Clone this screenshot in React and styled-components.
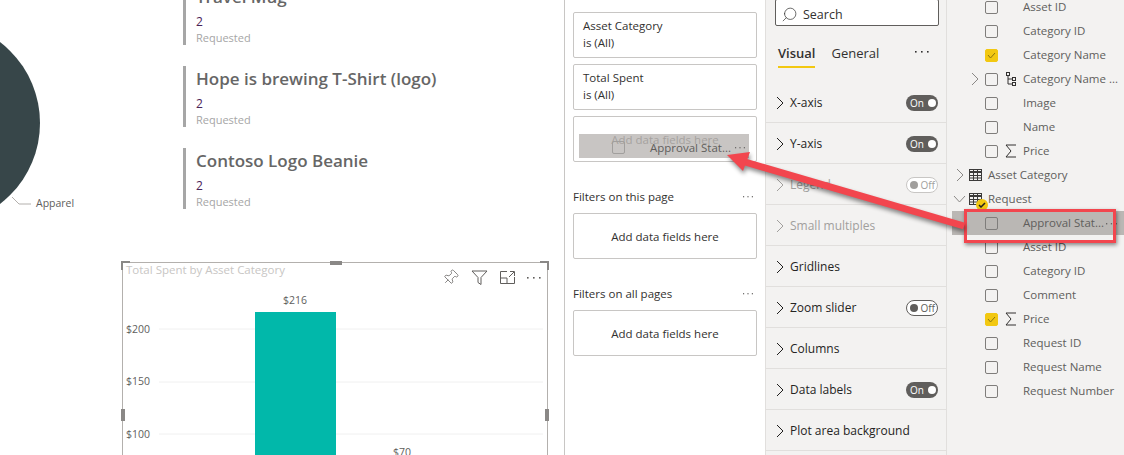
import { Pin, Search } from "lucide-react";
import { createGlobalStyle, styled } from "styled-components";

const FONT = `"Open Sans", "Noto Sans", "Liberation Sans", sans-serif`;

const requests = ["Travel Mug", "Hope is brewing T-Shirt (logo)", "Contoso Logo Beanie"];

const sections = [
  { name: "X-axis", toggle: "on" },
  { name: "Y-axis", toggle: "on" },
  { name: "Legend", toggle: "off", muted: true },
  { name: "Small multiples", muted: true },
  { name: "Gridlines" },
  { name: "Zoom slider", toggle: "off" },
  { name: "Columns" },
  { name: "Data labels", toggle: "on" },
  { name: "Plot area background" },
];

const fields = [
  { label: "Asset ID" },
  { label: "Category ID" },
  { label: "Category Name", checked: true },
  { label: "Category Name ...", icon: "tree", expand: true },
  { label: "Image" },
  { label: "Name" },
  { label: "Price", icon: "sigma" },
  { label: "Asset Category", group: "closed" },
  { label: "Request", group: "open", badge: true },
  { label: "Approval Stat...", active: true },
  { label: "Asset ID" },
  { label: "Category ID" },
  { label: "Comment" },
  { label: "Price", icon: "sigma", checked: true },
  { label: "Request ID" },
  { label: "Request Name" },
  { label: "Request Number" },
];

function Chevron({ open, color = "#323130", inset = 0 }) {
  return (
    <svg width="13" height="14" viewBox="0 0 13 14" fill="none" stroke={color} strokeWidth="1">
      {open ? (
        <polyline points="1,4 6.5,10 12,4" />
      ) : (
        <polyline points={`${inset},1 ${inset + 6},7 ${inset},13`} />
      )}
    </svg>
  );
}

function Dots({ color = "#605e5c", width = 15 }) {
  return (
    <svg width={width} height="3" viewBox="0 0 15 3" fill={color}>
      <rect x="0" y="1" width="1.6" height="1.6" />
      <rect x="6" y="1" width="1.6" height="1.6" />
      <rect x="12" y="1" width="1.6" height="1.6" />
    </svg>
  );
}

function Sigma() {
  return (
    <svg width="12" height="14" viewBox="0 0 12 14" fill="none" stroke="#323130" strokeWidth="1">
      <path d="M11 1H1l5 6-5 6h10" />
    </svg>
  );
}

function Tree() {
  return (
    <svg width="12" height="14" viewBox="0 0 12 14" fill="none" stroke="#323130" strokeWidth="1">
      <rect x="1.5" y="0.5" width="3" height="3" />
      <rect x="7.5" y="5.5" width="3" height="3" />
      <rect x="7.5" y="10.5" width="3" height="3" />
      <path d="M3 4v8h4.500M3 7h4.500" />
    </svg>
  );
}

function TableIcon() {
  return (
    <svg width="13" height="12" viewBox="0 0 13 12" fill="none" stroke="#3b3a39" strokeWidth="1">
      <rect x="0.5" y="0.5" width="12" height="11" />
      <path d="M0 3h13" strokeWidth="2" />
      <path d="M0 6.500h13M0 9h13M4.500 0v12M8.500 0v12" />
    </svg>
  );
}

function Toggle({ state, muted }) {
  return state === "on" ? (
    <ToggleOn>
      On
      <Knob />
    </ToggleOn>
  ) : (
    <ToggleOff $muted={muted}>
      <Knob $off $muted={muted} />
      Off
    </ToggleOff>
  );
}

function FieldRow({ field }) {
  if (field.group) {
    return (
      <GroupRow>
        <ChevronSlot>
          <Chevron open={field.group === "open"} color="#8a8886" inset={4} />
        </ChevronSlot>
        <TableSlot>
          <TableIcon />
          {field.badge && (
            <Badge>
              <svg width="8" height="6" viewBox="0 0 8 6" fill="none" stroke="#201f1e" strokeWidth="1.500">
                <polyline points="1,3 3,5 7,1" />
              </svg>
            </Badge>
          )}
        </TableSlot>
        <FieldLabel $group>{field.label}</FieldLabel>
      </GroupRow>
    );
  }
  return (
    <Row $active={field.active}>
      <ChevronSlot>{field.expand && <Chevron color="#8a8886" />}</ChevronSlot>
      <CheckBox $checked={field.checked}>
        {field.checked && (
          <svg width="9" height="7" viewBox="0 0 9 7" fill="none" stroke="#8a7410" strokeWidth="1">
            <polyline points="1,3 3.500,6 8,1" />
          </svg>
        )}
      </CheckBox>
      <IconSlot>
        {field.icon === "sigma" && <Sigma />}
        {field.icon === "tree" && <Tree />}
      </IconSlot>
      <FieldLabel>{field.label}</FieldLabel>
      {field.active && (
        <RowDots>
          <Dots width={12} />
        </RowDots>
      )}
    </Row>
  );
}

function App() {
  return (
    <Page>
      <GlobalStyle />
      <Canvas>
        <TopRow>
          <PieChart width="183" height="240" viewBox="0 0 183 240">
            <circle cx="-62" cy="123" r="102" fill="#374649" />
            <polyline points="12,197 19,204 31,204" fill="none" stroke="#b3b0ad" strokeWidth="1" />
            <text x="36" y="207" fontSize="10.5" fill="#605e5c" fontFamily={FONT}>
              Apparel
            </text>
          </PieChart>
          <RequestList>
            {requests.map((title) => (
              <RequestItem key={title}>
                <RequestTitle>{title}</RequestTitle>
                <RequestCount>2</RequestCount>
                <RequestStatus>Requested</RequestStatus>
              </RequestItem>
            ))}
          </RequestList>
        </TopRow>
        <ChartCard>
          <Corner $pos="tl" />
          <Corner $pos="tr" />
          <Handle $pos="top" />
          <Handle $pos="left" />
          <Handle $pos="right" />
          <ChartHeader>
            <ChartTitle>Total Spent by Asset Category</ChartTitle>
            <ChartTools>
              <PinIcon size={17} strokeWidth={1} color="#605e5c" />
              <svg width="17" height="15" viewBox="0 0 17 15" fill="none" stroke="#605e5c" strokeWidth="1">
                <path d="M1 1h15l-6 6.500v7l-3-2v-5z" />
              </svg>
              <svg width="15" height="13" viewBox="0 0 15 13" fill="none" stroke="#605e5c" strokeWidth="1">
                <path d="M7 .5H.5v12h14V6M.5 7H7v5.500M9 6l5-5M10 .5h4.500V5" />
              </svg>
              <Dots />
            </ChartTools>
          </ChartHeader>
          <svg width="424" height="170" viewBox="0 0 424 170" fontFamily={FONT} fontSize="10.5" fill="#605e5c">
            <line x1="36" x2="420" y1="44" y2="44" stroke="#f0f0f0" />
            <line x1="36" x2="420" y1="97" y2="97" stroke="#f0f0f0" />
            <line x1="36" x2="420" y1="149" y2="149" stroke="#f0f0f0" />
            <rect x="132" y="27" width="81" height="143" fill="#01b8aa" />
            <text x="3" y="48">$200</text>
            <text x="3" y="100">$150</text>
            <text x="3" y="153">$100</text>
            <text x="172" y="19" textAnchor="middle">$216</text>
            <text x="279" y="171" textAnchor="middle">$70</text>
          </svg>
        </ChartCard>
      </Canvas>

      <FilterPane>
        <FilterCard>
          <span>Asset Category</span>
          <span>is (All)</span>
        </FilterCard>
        <FilterCard>
          <span>Total Spent</span>
          <span>is (All)</span>
        </FilterCard>
        <FilterCard $empty>
          <DropHint>Add data fields here</DropHint>
        </FilterCard>
        <FilterHeading>
          Filters on this page
          <Dots width={11} />
        </FilterHeading>
        <FilterCard $empty>Add data fields here</FilterCard>
        <FilterHeading>
          Filters on all pages
          <Dots width={11} />
        </FilterHeading>
        <FilterCard $empty>Add data fields here</FilterCard>
      </FilterPane>

      <VisualPane>
        <SearchBox>
          <SearchIcon size={17} strokeWidth={1} color="#323130" />
          Search
        </SearchBox>
        <Tabs>
          <Tab $active>Visual</Tab>
          <Tab>General</Tab>
          <TabDots>
            <Dots color="#323130" />
          </TabDots>
        </Tabs>
        <Sections>
          {sections.map((s) => (
            <Section key={s.name} $muted={s.muted}>
              <Chevron color={s.muted ? "#a19f9d" : "#201f1e"} />
              <SectionName>{s.name}</SectionName>
              {s.toggle && <Toggle state={s.toggle} muted={s.muted} />}
            </Section>
          ))}
        </Sections>
      </VisualPane>

      <FieldsPane>
        {fields.map((f, i) => (
          <FieldRow key={i} field={f} />
        ))}
      </FieldsPane>

      <DragGhost>
        <GhostBox />
        <GhostLabel>Approval Stat...</GhostLabel>
        <Dots width={11} />
      </DragGhost>
      <RedBox />
      <Arrow width="1124" height="455" viewBox="0 0 1124 455">
        <line x1="745" y1="162" x2="964" y2="226" stroke="#f2464e" strokeWidth="7" />
        <polygon points="727,155 750,152 743,171" fill="#f2464e" />
      </Arrow>
    </Page>
  );
}

const GlobalStyle = createGlobalStyle`
  html, body {
    margin: 0;
    padding: 0;
    background: #ffffff;
  }
`;

const Page = styled.div`
  position: relative;
  display: flex;
  width: 1124px;
  height: 455px;
  overflow: hidden;
  font-family: ${FONT};
  font-size: 12px;
  color: #323130;
`;

const Canvas = styled.div`
  flex: none;
  width: 564px;
  background: #ffffff;
  border-right: 1px solid #c8c6c4;
`;

const TopRow = styled.div`
  display: flex;
  height: 262px;
`;

const PieChart = styled.svg`
  flex: none;
`;

const RequestList = styled.div`
  display: flex;
  flex-direction: column;
  gap: 21px;
  margin-top: -16px;
`;

const RequestItem = styled.div`
  height: 61px;
  box-sizing: border-box;
  padding-left: 10px;
  border-left: 3px solid #a6a6a6;
`;

const RequestTitle = styled.div`
  font-size: 17px;
  font-weight: 600;
  line-height: 25px;
  color: #666666;
`;

const RequestCount = styled.div`
  margin-top: 6px;
  font-size: 12px;
  line-height: 14px;
  color: #4a2358;
`;

const RequestStatus = styled.div`
  margin-top: 1px;
  font-size: 11px;
  line-height: 16px;
  color: #a6a6a6;
`;

const ChartCard = styled.div`
  position: relative;
  box-sizing: border-box;
  width: 426px;
  height: 260px;
  margin-left: 122px;
  border: 1px solid #b3b0ad;
`;

const Corner = styled.div`
  position: absolute;
  top: -2px;
  width: 9px;
  height: 9px;
  box-sizing: border-box;
  border-top: 2px solid #8a8886;
  ${(p) => (p.$pos === "tl" ? "left: -2px; border-left: 2px solid #8a8886;" : "right: -2px; border-right: 2px solid #8a8886;")}
`;

const Handle = styled.div`
  position: absolute;
  background: #8a8886;
  ${(p) => p.$pos === "top" && "top: -2px; left: 207px; width: 12px; height: 4px;"}
  ${(p) => p.$pos === "left" && "top: 146px; left: -2px; width: 4px; height: 12px;"}
  ${(p) => p.$pos === "right" && "top: 146px; right: -2px; width: 4px; height: 12px;"}
`;

const ChartHeader = styled.div`
  display: flex;
  justify-content: space-between;
  height: 22px;
`;

const ChartTitle = styled.div`
  padding: 0 0 0 3px;
  font-size: 11.500px;
  line-height: 14px;
  color: #c8c6c4;
`;

const ChartTools = styled.div`
  display: flex;
  align-items: center;
  gap: 12px;
  height: 22px;
  margin-top: 3px;
  padding-right: 5px;
`;

const PinIcon = styled(Pin)`
  transform: rotate(45deg);
`;

const FilterPane = styled.div`
  flex: none;
  box-sizing: border-box;
  width: 201px;
  padding: 12px 8px 0;
  display: flex;
  flex-direction: column;
  font-size: 11.500px;
  background: #ffffff;
  border-right: 1px solid #e1dfdd;
`;

const FilterCard = styled.div`
  position: relative;
  display: flex;
  flex-direction: column;
  box-sizing: border-box;
  height: 46px;
  margin-bottom: 6px;
  padding: 4px 9px;
  border: 1px solid #c8c6c4;
  border-radius: 2px;
  line-height: 17px;
  ${(p) => p.$empty && "align-items: center; justify-content: center; padding: 0;"}
`;

const DropHint = styled.span`
  margin-top: 1px;
  color: #8a8886;
`;

const FilterHeading = styled.div`
  display: flex;
  align-items: center;
  justify-content: space-between;
  height: 18px;
  margin: 19px 3px 8px 0;
`;

const VisualPane = styled.div`
  flex: none;
  box-sizing: border-box;
  width: 181px;
  background: #f3f2f1;
  border-right: 1px solid #e1dfdd;
`;

const SearchBox = styled.div`
  display: flex;
  align-items: center;
  gap: 5px;
  box-sizing: border-box;
  width: 164px;
  height: 27px;
  margin: -1px 0 0 9px;
  padding: 3px 0 0 5px;
  font-size: 12.500px;
  background: #ffffff;
  border: 1px solid #605e5c;
  border-radius: 2px;
`;

const SearchIcon = styled(Search)`
  transform: scaleX(-1);
`;

const Tabs = styled.div`
  display: flex;
  align-items: flex-start;
  gap: 16px;
  height: 38px;
  margin-top: 18px;
  padding-left: 12px;
`;

const Tab = styled.div`
  height: 22px;
  font-size: 13px;
  line-height: 19px;
  font-weight: ${(p) => (p.$active ? 600 : 400)};
  ${(p) => p.$active && "border-bottom: 2px solid #f2c811;"}
`;

const TabDots = styled.div`
  display: flex;
  margin: 6px 0 0 auto;
  padding-right: 16px;
`;

const Sections = styled.div`
  display: flex;
  flex-direction: column;
`;

const Section = styled.div`
  display: flex;
  align-items: center;
  box-sizing: border-box;
  height: 41px;
  padding: 1px 8px 0 11px;
  color: ${(p) => (p.$muted ? "#a19f9d" : "#252423")};
  border-bottom: 1px solid #e1dfdd;
`;

const SectionName = styled.span`
  flex: 1;
  margin-left: 0;
  font-weight: 500;
`;

const ToggleOn = styled.div`
  display: flex;
  align-items: center;
  justify-content: space-between;
  box-sizing: border-box;
  width: 32px;
  height: 16px;
  padding: 0 2px 0 4px;
  font-size: 10px;
  color: #ffffff;
  background: #605e5c;
  border-radius: 8px;
`;

const ToggleOff = styled.div`
  display: flex;
  align-items: center;
  justify-content: space-between;
  box-sizing: border-box;
  width: 32px;
  height: 16px;
  padding: 0 2px 0 3px;
  font-size: 10px;
  color: ${(p) => (p.$muted ? "#a19f9d" : "#605e5c")};
  background: #ffffff;
  border: 1px solid ${(p) => (p.$muted ? "#c8c6c4" : "#605e5c")};
  border-radius: 8px;
`;

const Knob = styled.span`
  width: 8px;
  height: 8px;
  border-radius: 50%;
  background: ${(p) => (!p.$off ? "#ffffff" : p.$muted ? "#a19f9d" : "#605e5c")};
`;

const FieldsPane = styled.div`
  flex: 1;
  margin-top: -5px;
  font-size: 11.500px;
  background: #f3f2f1;
  box-shadow: 0 5px 0 #f3f2f1;
`;

const Row = styled.div`
  position: relative;
  display: flex;
  align-items: center;
  height: 24px;
  padding-left: ${(p) => (p.$active ? "20px" : "25px")};
  margin-left: ${(p) => (p.$active ? "5px" : "0")};
  background: ${(p) => (p.$active ? "#bab7b4" : "transparent")};
`;

const GroupRow = styled.div`
  display: flex;
  align-items: center;
  height: 24px;
  padding-left: 6px;
`;

const ChevronSlot = styled.div`
  flex: none;
  display: flex;
  width: 13px;
`;

const CheckBox = styled.div`
  flex: none;
  display: flex;
  align-items: center;
  justify-content: center;
  box-sizing: border-box;
  width: 13px;
  height: 13px;
  border: 1px solid ${(p) => (p.$checked ? "#f2c811" : "#7f7d7b")};
  border-radius: 2px;
  background: ${(p) => (p.$checked ? "#f2c811" : "transparent")};
`;

const GhostBox = styled(CheckBox)`
  border-color: #a19f9d;
`;

const IconSlot = styled.div`
  flex: none;
  display: flex;
  width: 14px;
  margin-left: 7px;
`;

const TableSlot = styled.div`
  position: relative;
  flex: none;
  display: flex;
  margin-left: 3px;
`;

const Badge = styled.span`
  position: absolute;
  left: 7px;
  top: 6px;
  display: flex;
  align-items: center;
  justify-content: center;
  width: 12px;
  height: 12px;
  border-radius: 50%;
  background: #f2c811;
`;

const FieldLabel = styled.span`
  margin-left: ${(p) => (p.$group ? "6px" : "4px")};
  padding-bottom: 1px;
  white-space: nowrap;
  color: #605e5c;
`;

const RowDots = styled.div`
  position: absolute;
  right: 6px;
  top: 11px;
  display: flex;
`;

const DragGhost = styled.div`
  position: absolute;
  left: 579px;
  top: 134px;
  display: flex;
  align-items: center;
  box-sizing: border-box;
  width: 170px;
  height: 24px;
  padding: 2px 3px 0 33px;
  font-size: 11.500px;
  background: rgba(176, 173, 170, 0.7);
`;

const GhostLabel = styled.span`
  flex: 1;
  margin-left: 25px;
  white-space: nowrap;
  color: #605e5c;
`;

const RedBox = styled.div`
  position: absolute;
  left: 964px;
  top: 209px;
  box-sizing: border-box;
  width: 152px;
  height: 34px;
  border: 3px solid #f2464e;
  box-shadow: 1px 2px 4px rgba(0, 0, 0, 0.45);
`;

const Arrow = styled.svg`
  position: absolute;
  left: 0;
  top: 0;
  pointer-events: none;
  filter: drop-shadow(1px 3px 2px rgba(0, 0, 0, 0.45));
`;

export default App;
